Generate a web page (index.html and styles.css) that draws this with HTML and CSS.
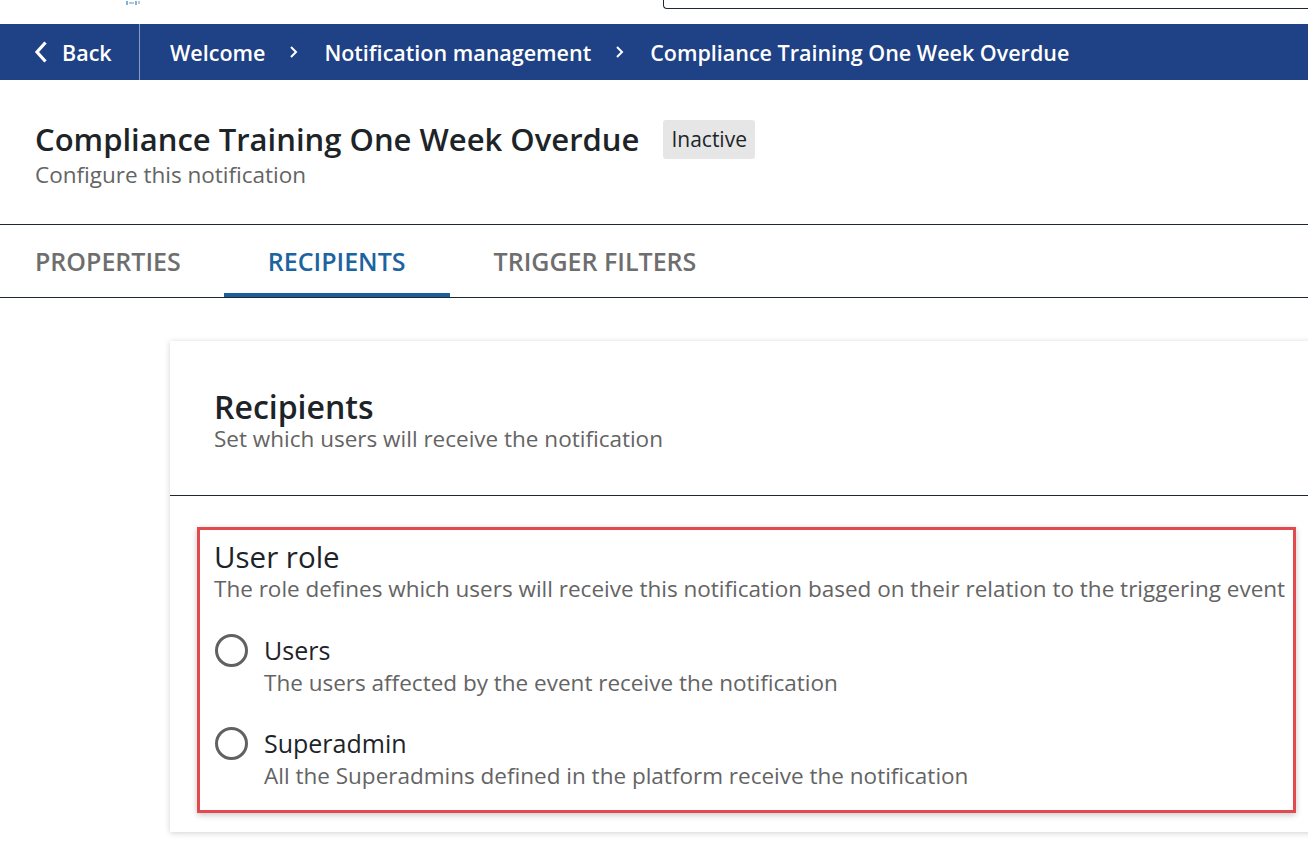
FILE: index.html
```html
<!DOCTYPE html>
<html lang="en">
<head>
<meta charset="UTF-8">
<title>Compliance Training One Week Overdue</title>
<link rel="stylesheet" href="styles.css">
</head>
<body>

<div class="topo">
    <div class="logo">
        <svg width="16" height="5" viewBox="0 0 16 5">
            <rect x="1" y="0" width="2" height="4" fill="#7fb3d9"/>
            <rect x="4" y="1" width="5" height="2" fill="#a9cbe6"/>
            <rect x="10" y="0" width="2" height="4" fill="#7fb3d9"/>
            <rect x="13" y="0" width="2" height="3" fill="#a9cbe6"/>
        </svg>
    </div>
    <div class="busca"></div>
</div>

<nav class="barra">
    <a class="voltar" href="#">
        <svg width="14" height="24" viewBox="0 0 14 24"><path d="M11.5 2.5 L3 12 L11.5 21.5" fill="none" stroke="#fff" stroke-width="3.2"/></svg>
        Back
    </a>
    <div class="migalhas">
        <span>Welcome</span>
        <svg class="seta" width="8" height="16" viewBox="0 0 8 16"><path d="M1 3 L6 8 L1 13" fill="none" stroke="#fff" stroke-width="2"/></svg>
        <span>Notification management</span>
        <svg class="seta" width="8" height="16" viewBox="0 0 8 16"><path d="M1 3 L6 8 L1 13" fill="none" stroke="#fff" stroke-width="2"/></svg>
        <span>Compliance Training One Week Overdue</span>
    </div>
</nav>

<header class="cabecalho">
    <div class="titulo-linha">
        <h1>Compliance Training One Week Overdue</h1>
        <span class="etiqueta">Inactive</span>
    </div>
    <p class="subtitulo">Configure this notification</p>
</header>

<div class="abas">
    <div class="aba">PROPERTIES</div>
    <div class="aba ativa">RECIPIENTS</div>
    <div class="aba">TRIGGER FILTERS</div>
</div>

<main class="conteudo">
    <section class="cartao">
        <div class="cartao-topo">
            <h2>Recipients</h2>
            <p>Set which users will receive the notification</p>
        </div>
        <div class="cartao-corpo">
            <div class="papel">
                <h3>User role</h3>
                <p class="papel-desc">The role defines which users will receive this notification based on their relation to the triggering event</p>

                <label class="opcao">
                    <span class="radio"></span>
                    <span class="opcao-texto">
                        <span class="opcao-nome">Users</span>
                        <span class="opcao-desc">The users affected by the event receive the notification</span>
                    </span>
                </label>

                <label class="opcao">
                    <span class="radio"></span>
                    <span class="opcao-texto">
                        <span class="opcao-nome">Superadmin</span>
                        <span class="opcao-desc">All the Superadmins defined in the platform receive the notification</span>
                    </span>
                </label>
            </div>
        </div>
    </section>
</main>

</body>
</html>
```

FILE: styles.css
```css
html, body {
    margin: 0;
    padding: 0;
    overflow: hidden;
}

body {
    font-family: "Open Sans", "Noto Sans", sans-serif;
    background-color: #fff;
    color: #1d2428;
    width: 1308px;
    height: 848px;
}

.topo {
    display: flex;
    align-items: flex-start;
    height: 24px;
}

.logo {
    margin-left: 125px;
    height: 5px;
    line-height: 0;
}

.busca {
    margin-left: 522px;
    flex: 1;
    height: 8px;
    border: 1px solid #1c2733;
    border-top: none;
    border-right: none;
    border-bottom-left-radius: 4px;
}

.barra {
    display: flex;
    align-items: stretch;
    height: 56px;
    background-color: #1f4185;
    color: #fff;
    font-size: 21.5px;
    font-weight: 600;
}

.voltar {
    display: flex;
    align-items: center;
    gap: 14px;
    width: 105px;
    padding-left: 34px;
    color: #fff;
    text-decoration: none;
    border-right: 1px solid #8b9bc0;
}

.migalhas {
    display: flex;
    align-items: center;
    padding-left: 30px;
}

.migalhas .seta {
    margin: 0 26px 0 25px;
}

.cabecalho {
    padding: 38px 35px 34px;
    border-bottom: 1px solid #1c2733;
}

.titulo-linha {
    display: flex;
    align-items: center;
    gap: 24px;
}

h1 {
    margin: 0;
    font-size: 31px;
    font-weight: 600;
    line-height: 42px;
}

.etiqueta {
    background-color: #e6e6e6;
    border-radius: 3px;
    padding: 5px 8px;
    font-size: 21px;
    font-weight: 500;
    line-height: 29px;
}

.subtitulo {
    margin: 0;
    font-size: 22.5px;
    color: #646464;
    line-height: 30px;
}

.abas {
    display: flex;
    border-bottom: 1px solid #1c2733;
}

.aba {
    padding: 0 44px;
    height: 72px;
    line-height: 72px;
    font-size: 25px;
    font-weight: 600;
    color: #6e6e6e;
    box-sizing: border-box;
}

.aba:first-child {
    padding: 0 43px 0 35px;
}

.aba.ativa {
    color: #1b63a1;
    border-bottom: 4px solid #1b5f9c;
}

.conteudo {
    padding: 43px 0 0 170px;
}

.cartao {
    width: 1180px;
    background-color: #fff;
    box-shadow: 0 1px 6px rgba(0, 0, 0, 0.18);
    padding-bottom: 19px;
}

.cartao-topo {
    padding: 49px 44px 42px;
    border-bottom: 1px solid #1c2733;
}

h2 {
    margin: 0 0 1px;
    font-size: 32px;
    font-weight: 600;
    line-height: 34px;
}

.cartao-topo p {
    margin: 0;
    font-size: 22.5px;
    color: #646464;
    line-height: 28px;
}

.cartao-corpo {
    padding: 31px 0 0 27px;
}

.papel {
    box-sizing: border-box;
    width: 1099px;
    border: 3px solid #e34a4f;
    box-shadow: 0 2px 6px rgba(0, 0, 0, 0.22);
    padding: 10px 0 18px 14px;
}

h3 {
    margin: 0;
    font-size: 29.5px;
    font-weight: 500;
    line-height: 34px;
}

.papel-desc {
    margin: 0 0 29px;
    font-size: 22.5px;
    color: #646464;
    line-height: 30px;
}

.opcao {
    display: flex;
    align-items: flex-start;
    gap: 16px;
    margin-bottom: 27px;
}

.opcao:last-child {
    margin-bottom: 0;
}

.radio {
    box-sizing: border-box;
    width: 33px;
    height: 33px;
    border: 3px solid #616161;
    border-radius: 50%;
    margin: 1px 0 0 1px;
    flex-shrink: 0;
}

.opcao-texto {
    display: flex;
    flex-direction: column;
}

.opcao-nome {
    font-size: 25px;
    line-height: 34px;
}

.opcao-desc {
    font-size: 22.5px;
    color: #646464;
    line-height: 32px;
}
```
